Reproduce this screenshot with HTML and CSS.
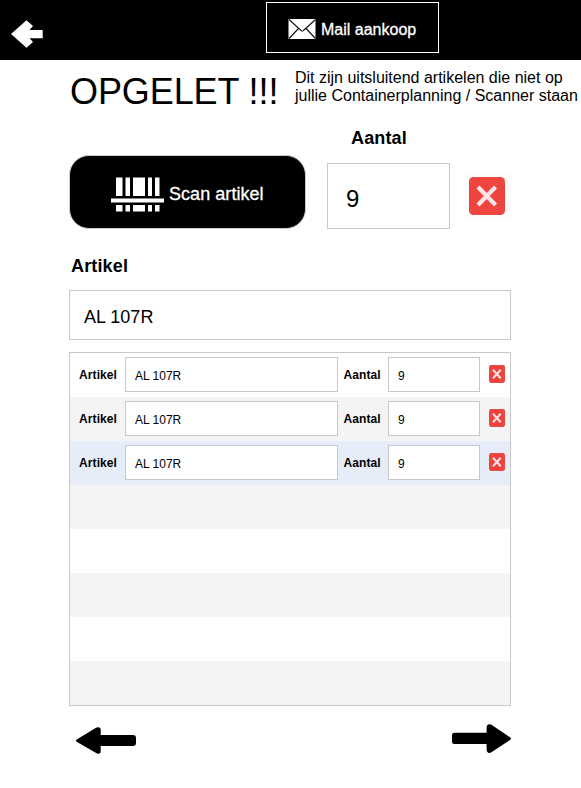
FILE: index.html
```
<!DOCTYPE html>
<html lang="nl">
<head>
<meta charset="utf-8">
<title>Mail aankoop</title>
<link rel="stylesheet" href="styles.css">
</head>
<body>
<svg class="defs" width="0" height="0" aria-hidden="true">
  <symbol id="delete" viewBox="0 0 36 38" preserveAspectRatio="none">
    <rect width="36" height="38" rx="4.5" fill="#ee453f"/>
    <path d="M9 10 26.500 28M26.500 10 9 28" stroke="#fde5e8" stroke-width="4.200" fill="none"/>
  </symbol>
</svg>
<header class="topbar">
  <svg class="back" width="32" height="28" viewBox="0 0 32 28"><path d="M0 14 15.500 0.300 22 6 18.500 10H31.700V18.200H18.500L22 22 15.500 27.700Z" fill="#fff"/></svg>
  <div class="mail">
    <svg width="28" height="20" viewBox="0 0 28 20"><rect x=".5" width="27" height="20" fill="#fff"/><path d="M1 .5 12.500 11Q14.300 13 16 11L27.500 .5M1 19.500 10.500 9.500M27.500 19.500 18 9.500" fill="none" stroke="#111" stroke-width="1.100"/></svg>
    <span>Mail aankoop</span>
  </div>
</header>
<main class="page">
  <section class="notice">
    <h1>OPGELET !!!</h1>
    <p>Dit zijn uitsluitend artikelen die niet op<br>jullie Containerplanning / Scanner staan</p>
  </section>
  <section class="entry">
    <div class="scan">
      <svg width="53" height="35" viewBox="0 0 53 35"><path d="M5 .5h6.500V19H5zM14.500 .5H19V19h-4.500zM22 .5h12V19H22zM37 .5h4V19h-4zM44 .5h4.500V19H44zM0 21.500h53v4H0zM5 28h6.500v6.500H5zM14.500 28H19v6.500h-4.500zM22 28h12v6.500H22zM37 28h4v6.500h-4zM44 28h4.500v6.500H44z" fill="#fff"/></svg>
      <span>Scan artikel</span>
    </div>
    <div class="quantity">
      <h2>Aantal</h2>
      <div class="field amount">9</div>
    </div>
    <div class="clear"><svg width="36" height="38"><use href="#delete"/></svg></div>
  </section>
  <h2 class="article-label">Artikel</h2>
  <div class="field article">AL 107R</div>
  <div class="list">
    <div class="row"><b>Artikel</b><div class="field name">AL 107R</div><b>Aantal</b><div class="field count">9</div><svg width="16" height="18"><use href="#delete"/></svg></div>
    <div class="row"><b>Artikel</b><div class="field name">AL 107R</div><b>Aantal</b><div class="field count">9</div><svg width="16" height="18"><use href="#delete"/></svg></div>
    <div class="row selected"><b>Artikel</b><div class="field name">AL 107R</div><b>Aantal</b><div class="field count">9</div><svg width="16" height="18"><use href="#delete"/></svg></div>
    <div class="row"></div>
    <div class="row"></div>
    <div class="row"></div>
    <div class="row"></div>
    <div class="row"></div>
  </div>
  <nav class="pager">
    <svg class="prev" width="60" height="27" viewBox="0 0 60 27"><path d="M.6 12.500 20.500 .6Q24.700-.7 24.700 3V8H57Q60 8 60 11V16Q60 19 57 19H24.700V24Q24.700 27.700 21 26.500L.6 14.800Q-.5 13.700 .6 12.500Z"/></svg>
    <svg class="next" width="59" height="29" viewBox="0 0 59 29"><path d="M58.400 13.500 39 .5Q35-1 34.600 3.500V8.700H2.500Q0 8.700 0 11V17.500Q0 20 2.500 20H34.600V25.500Q35 30 39 28.500L58.400 15.700Q59.500 14.600 58.400 13.500Z"/></svg>
  </nav>
</main>
</body>
</html>
```
FILE: styles.css
```
* { box-sizing: border-box; }
body {
  margin: 0;
  background: #fff;
  color: #000;
  font-family: "Liberation Sans", Arial, sans-serif;
  overflow: hidden;
}
svg { display: block; flex: none; }
.defs { height: 0; }
h1, h2, p { margin: 0; }
h2 { font-size: 18px; line-height: 20px; letter-spacing: 0.15px; }
.topbar {
  display: flex;
  align-items: flex-start;
  height: 60px;
  background: #000;
  color: #fff;
}
.back { margin: 20px 223px 0 11px; }
.mail {
  display: flex;
  align-items: center;
  gap: 5px;
  width: 173px;
  height: 51px;
  margin-top: 2px;
  padding: 2px 0 0 21px;
  border: 1px solid #fff;
  font-size: 16px;
}
.mail span { padding-top: 2px; }
.mail span, .scan span { -webkit-text-stroke: 0.3px #fff; }
.page { padding-left: 69px; }
.notice { display: flex; height: 67px; white-space: nowrap; }
.notice h1 {
  width: 226px;
  padding: 12px 0 0 1px;
  font-size: 36px;
  font-weight: 400;
  line-height: 40px;
  letter-spacing: -0.1px;
}
.notice p { padding-top: 9px; font-size: 16px; line-height: 18px; }
.entry { display: flex; align-items: flex-end; height: 102px; }
.scan {
  display: flex;
  align-items: center;
  gap: 5px;
  width: 237px;
  height: 74px;
  margin-right: 21px;
  padding: 5px 0 0 41px;
  border: 1px solid #ccc;
  border-radius: 20px;
  background: #000;
  color: #fff;
  font-size: 18px;
  letter-spacing: 0.05px;
}
.quantity h2 { margin: 0 0 15px 24px; }
.field {
  display: flex;
  align-items: center;
  border: 1px solid #c8c8c8;
  background: #fff;
}
.amount { width: 123px; height: 66px; padding: 5px 0 0 18px; font-size: 24px; }
.clear { margin: 0 0 10px 15px; padding: 4px; background: #fcfcfc; }
.article-label { margin: 27px 0 14px 2px; }
.article { width: 442px; height: 50px; padding: 5px 0 0 14px; font-size: 18px; }
.list { width: 442px; margin-top: 12px; border: 1px solid #c8c8c8; }
.row {
  display: grid;
  grid-template-columns: 46px 213px 50px 92px 16px;
  align-items: center;
  height: 44px;
  padding-left: 9px;
  font-size: 12px;
}
.row:nth-child(even) { background: #f4f4f4; }
.row.selected { background: #e6edf8; }
.row b { letter-spacing: 0.1px; }
.row b:nth-of-type(2) { padding-left: 5.5px; }
.row .field { height: 35px; margin-bottom: 1px; padding: 3px 0 0 9px; }
.row svg { margin: -2px 0 0 9px; }
.pager {
  display: flex;
  justify-content: space-between;
  width: 442px;
  padding: 18px 0 0 7px;
}
.prev { margin-top: 3px; }
```
